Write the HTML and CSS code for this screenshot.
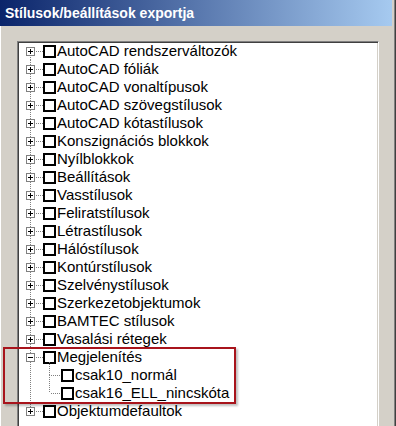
FILE: index.html
```html
<html>
    <head>
        <title>Stílusok/beállítások exportja</title>
        <meta charset="utf-8">
        <link rel="stylesheet" href="styles.css">
    </head>
    <body>
        <div class="window">
            <div class="title-bar">Stílusok/beállítások exportja</div>
            <div class="client">
                <div class="tree">
                    <div class="row first"><span class="exp"><i class="box plus"></i></span><span class="hline"></span><span class="check"></span><span class="label">AutoCAD rendszerváltozók</span></div>
                    <div class="row"><span class="exp"><i class="box plus"></i></span><span class="hline"></span><span class="check"></span><span class="label">AutoCAD fóliák</span></div>
                    <div class="row"><span class="exp"><i class="box plus"></i></span><span class="hline"></span><span class="check"></span><span class="label">AutoCAD vonaltípusok</span></div>
                    <div class="row"><span class="exp"><i class="box plus"></i></span><span class="hline"></span><span class="check"></span><span class="label">AutoCAD szövegstílusok</span></div>
                    <div class="row"><span class="exp"><i class="box plus"></i></span><span class="hline"></span><span class="check"></span><span class="label">AutoCAD kótastílusok</span></div>
                    <div class="row"><span class="exp"><i class="box plus"></i></span><span class="hline"></span><span class="check"></span><span class="label">Konszignációs blokkok</span></div>
                    <div class="row"><span class="exp"><i class="box plus"></i></span><span class="hline"></span><span class="check"></span><span class="label">Nyílblokkok</span></div>
                    <div class="row"><span class="exp"><i class="box plus"></i></span><span class="hline"></span><span class="check"></span><span class="label">Beállítások</span></div>
                    <div class="row"><span class="exp"><i class="box plus"></i></span><span class="hline"></span><span class="check"></span><span class="label">Vasstílusok</span></div>
                    <div class="row"><span class="exp"><i class="box plus"></i></span><span class="hline"></span><span class="check"></span><span class="label">Feliratstílusok</span></div>
                    <div class="row"><span class="exp"><i class="box plus"></i></span><span class="hline"></span><span class="check"></span><span class="label">Létrastílusok</span></div>
                    <div class="row"><span class="exp"><i class="box plus"></i></span><span class="hline"></span><span class="check"></span><span class="label">Hálóstílusok</span></div>
                    <div class="row"><span class="exp"><i class="box plus"></i></span><span class="hline"></span><span class="check"></span><span class="label">Kontúrstílusok</span></div>
                    <div class="row"><span class="exp"><i class="box plus"></i></span><span class="hline"></span><span class="check"></span><span class="label">Szelvénystílusok</span></div>
                    <div class="row"><span class="exp"><i class="box plus"></i></span><span class="hline"></span><span class="check"></span><span class="label">Szerkezetobjektumok</span></div>
                    <div class="row"><span class="exp"><i class="box plus"></i></span><span class="hline"></span><span class="check"></span><span class="label">BAMTEC stílusok</span></div>
                    <div class="row"><span class="exp"><i class="box plus"></i></span><span class="hline"></span><span class="check"></span><span class="label">Vasalási rétegek</span></div>
                    <div class="row open"><span class="exp"><i class="box"></i></span><span class="hline"></span><span class="check"></span><span class="label">Megjelenítés</span></div>
                    <div class="row child"><span class="exp"></span><span class="gap"></span><span class="branch"></span><span class="check"></span><span class="label">csak10_normál</span></div>
                    <div class="row child last-child"><span class="exp"></span><span class="gap"></span><span class="branch"></span><span class="check"></span><span class="label">csak16_ELL_nincskóta</span></div>
                    <div class="row last"><span class="exp"><i class="box plus"></i></span><span class="hline"></span><span class="check"></span><span class="label">Objektumdefaultok</span></div>
                </div>
            </div>
            <div class="highlight"></div>
        </div>
    </body>
</html>
```

FILE: styles.css
```css
body {
    margin: 0;
    width: 396px;
    height: 426px;
    overflow: hidden;
    background: #d4d0c8;
}

.window {
    position: relative;
    height: 426px;
    border-right: 1px solid #404040;
    box-sizing: border-box;
    width: 396px;
    background: #d4d0c8;
    box-shadow: inset -1px 0 #808080, inset 1px 0 #ffffff;
}

.title-bar {
    height: 26px;
    margin-right: 3px;
    padding-left: 5px;
    display: flex;
    align-items: center;
    color: #fff;
    font-family: 'Liberation Sans', sans-serif;
    font-weight: bold;
    font-size: 14px;
    background: linear-gradient(to right, #0a246a, #a6caf0);
}

.client {
    padding: 15px 16px 0 17px;
}

.tree {
    height: 400px;
    background: #fff;
    border-top: 1px solid #808080;
    border-left: 1px solid #808080;
    border-right: 1px solid #fff;
    box-shadow: inset 1px 1px #404040, inset -1px 0 #d4d0c8;
    padding: 0 0 0 8px;
    font-family: 'Liberation Sans', sans-serif;
    font-size: 15px;
    color: #000;
}

.row {
    display: flex;
    align-items: center;
    height: 18px;
}

.exp {
    position: relative;
    width: 9px;
    height: 18px;
    display: flex;
    align-items: center;
    flex: none;
}

/* vertical tree line */
.exp::before {
    content: "";
    position: absolute;
    left: 4px;
    top: 0;
    bottom: 0;
    width: 1px;
    background: repeating-linear-gradient(to bottom, #808080 0 1px, transparent 1px 2px);
}

.first .exp::before {
    top: 9px;
}

.last .exp::before {
    bottom: 9px;
}

.box {
    position: relative;
    width: 7px;
    height: 7px;
    border: 1px solid #808080;
    background: #fff;
    z-index: 1;
}

.box::before {
    content: "";
    position: absolute;
    left: 1px;
    top: 3px;
    width: 5px;
    height: 1px;
    background: #000;
}

.box.plus::after {
    content: "";
    position: absolute;
    left: 3px;
    top: 1px;
    width: 1px;
    height: 5px;
    background: #000;
}

.hline {
    width: 8px;
    height: 1px;
    flex: none;
    background: repeating-linear-gradient(to right, transparent 0 1px, #808080 1px 2px);
}

.gap {
    width: 8px;
    flex: none;
}

.branch {
    position: relative;
    width: 18px;
    height: 18px;
    flex: none;
}

.branch::before {
    content: "";
    position: absolute;
    left: 6px;
    top: -4px;
    height: 13px;
    width: 1px;
    background: repeating-linear-gradient(to bottom, #808080 0 1px, transparent 1px 2px);
}

.last-child .branch::before {
    top: -9px;
    height: 18px;
}

.branch::after {
    content: "";
    position: absolute;
    left: 7px;
    top: 9px;
    width: 11px;
    height: 1px;
    background: repeating-linear-gradient(to right, transparent 0 1px, #808080 1px 2px);
}

.check {
    width: 9px;
    height: 9px;
    border: 2px solid #000;
    background: #fff;
    flex: none;
    margin-right: 1px;
}

.label {
    white-space: nowrap;
    line-height: 18px;
}

.highlight {
    position: absolute;
    left: 3px;
    top: 347px;
    width: 229px;
    height: 53px;
    border: 2px solid #a8141c;
    box-shadow: 2px 2px 2px rgba(0, 0, 0, 0.25);
}
```
